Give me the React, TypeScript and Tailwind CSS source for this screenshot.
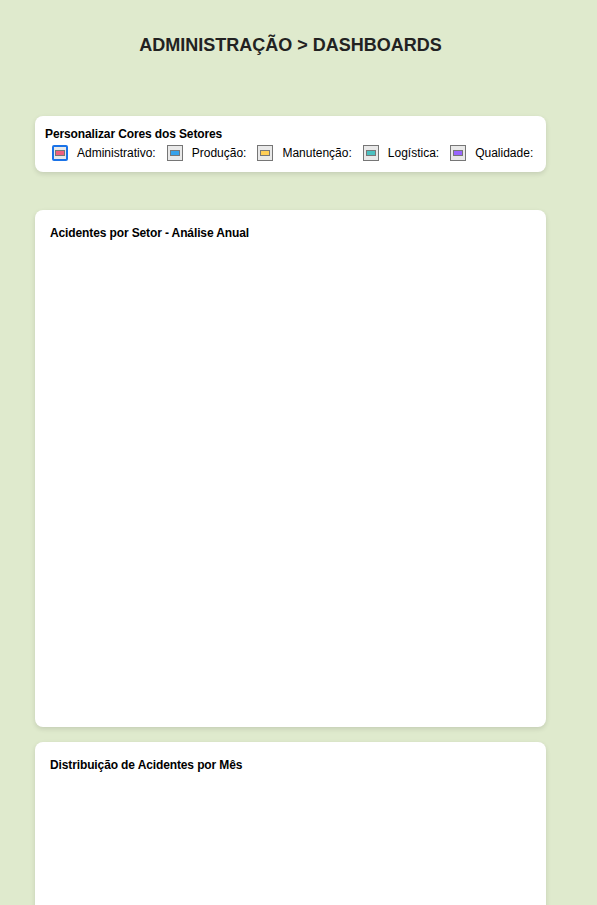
import React from "react";

const sectors = [
  { name: "Administrativo:", color: "#f0607e", focus: true },
  { name: "Produção:", color: "#36a2eb" },
  { name: "Manutenção:", color: "#ffce56" },
  { name: "Logística:", color: "#4bc0c0" },
  { name: "Qualidade:", color: "#9966ff" },
];

function Swatch({ color, focus }: { color: string; focus?: boolean }) {
  return (
    <div
      className={
        "w-4 h-4 flex items-center justify-center bg-[#e9e9e9] " +
        (focus ? "border-2 border-[#1a73e8] rounded-[2px]" : "border border-[#767676]")
      }
    >
      <div className="w-[10px] h-[6px] border border-[#777]" style={{ backgroundColor: color }} />
    </div>
  );
}

export default function App() {
  return (
    <div
      className="min-h-[905px] bg-[#dfeacd] text-black"
      style={{ fontFamily: '"Liberation Sans", Arial, sans-serif' }}
    >
      <div className="ml-[35px] w-[511px] pt-[34px]">
        <h1 className="text-center text-[18px] leading-[22px] font-bold text-[#222] h-[22px]">
          ADMINISTRAÇÃO &gt; DASHBOARDS
        </h1>
        <div className="mt-[60px] bg-white rounded-lg shadow-[0_2px_5px_rgba(0,0,0,0.12)] h-[56px] pl-[10px] pt-[11px]">
          <div className="text-[12px] leading-[14px] font-bold tracking-[-0.12px]">Personalizar Cores dos Setores</div>
          <div className="flex items-center mt-[4px] pl-[7px] text-[12px] leading-[16px]">
            {sectors.map((s) => (
              <div key={s.name} className="flex items-center mr-[11px]">
                <Swatch color={s.color} focus={s.focus} />
                <span className="ml-[9px]">{s.name}</span>
              </div>
            ))}
          </div>
        </div>
        <div className="mt-[38px] bg-white rounded-lg shadow-[0_2px_5px_rgba(0,0,0,0.12)] h-[517px] px-[15px] pt-[16px]">
          <div className="text-[12px] leading-[14px] font-bold tracking-[-0.12px]">Acidentes por Setor - Análise Anual</div>
        </div>
        <div className="mt-[15px] bg-white rounded-lg shadow-[0_2px_5px_rgba(0,0,0,0.12)] h-[300px] px-[15px] pt-[16px]">
          <div className="text-[12px] leading-[14px] font-bold tracking-[-0.12px]">Distribuição de Acidentes por Mês</div>
        </div>
      </div>
    </div>
  );
}
